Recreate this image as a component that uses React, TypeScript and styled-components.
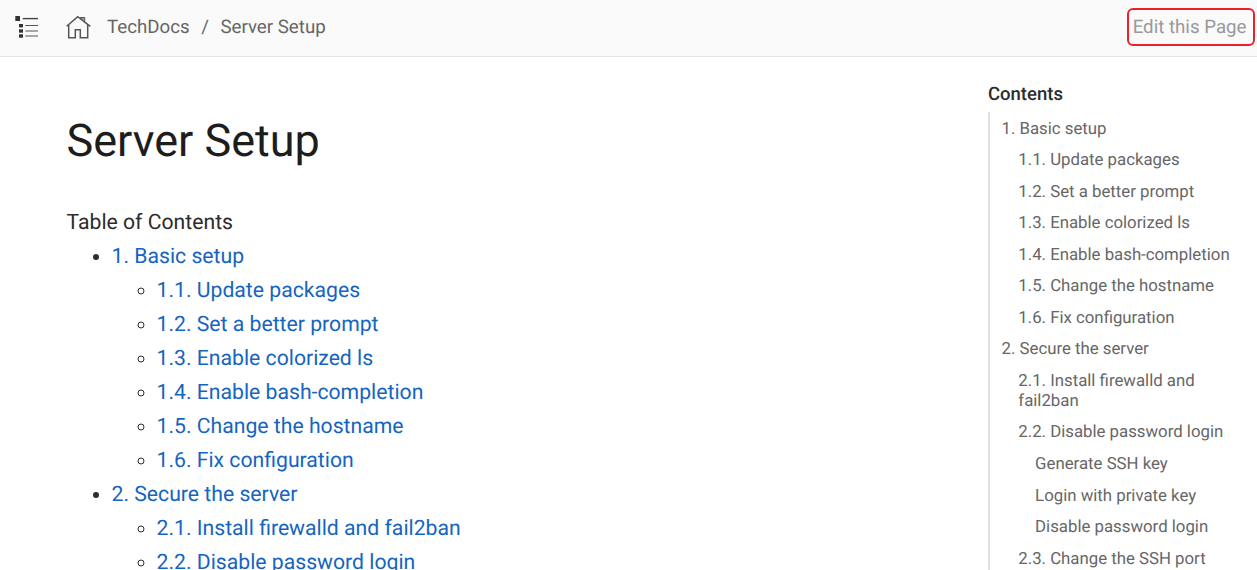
import React from "react";
import styled, { createGlobalStyle } from "styled-components";

const GlobalStyle = createGlobalStyle`
  html, body {
    margin: 0;
    padding: 0;
    height: 100%;
    overflow: hidden;
    background: #fff;
    font-family: Roboto, "Liberation Sans", sans-serif;
    text-rendering: geometricPrecision;
  }
  * { box-sizing: border-box; }
`;

const Page = styled.div`
  width: 1257px;
  height: 570px;
  overflow: hidden;
  display: flex;
  flex-direction: column;
`;

const Header = styled.header`
  flex: none;
  height: 57px;
  background: #fafafa;
  border-bottom: 1px solid #e5e5e5;
  display: flex;
  align-items: center;
  padding: 0 2px 2px 15px;
`;

const IconSlot = styled.span<{ $gap: number }>`
  display: flex;
  margin-right: ${(p) => p.$gap}px;
`;

const Crumbs = styled.nav`
  display: flex;
  align-items: center;
  font-size: 18.72px;
  color: #666;
  flex: 1;
`;

const CrumbSep = styled.span`
  margin: 0 11.5px;
`;

const EditLink = styled.a`
  font-size: 18.72px;
  color: #999;
  border: 2px solid #e8212c;
  border-radius: 6px;
  padding: 4px 6.5px 4px 4px;
  line-height: 26px;
`;

const Body = styled.div`
  flex: 1;
  display: flex;
  min-height: 0;
`;

const Main = styled.main`
  width: 988px;
  flex: none;
  padding: 0 0 0 66.5px;
`;

const Title = styled.h1`
  margin: 54px 0 35px;
  font-size: 45px;
  line-height: 60px;
  font-weight: 400;
  color: #1d1d1d;
`;

const TocHeading = styled.p`
  margin: 0;
  font-size: 21.2px;
  line-height: 34px;
  color: #2c2c2c;
`;

const TocList = styled.ul<{ $nested?: boolean }>`
  margin: 0;
  padding-left: 45px;
  list-style-type: ${(p) => (p.$nested ? "circle" : "disc")};
  font-size: 21.2px;
  line-height: 34px;
  color: #2c2c2c;
`;

const TocLink = styled.a`
  color: #1565c0;
`;

const Aside = styled.aside`
  flex: 1;
  padding-top: 25px;
`;

const AsideTitle = styled.div`
  font-size: 18.5px;
  font-weight: 500;
  line-height: 24px;
  color: #2c2c2c;
  margin-bottom: 6px;
`;

const AsideList = styled.ul`
  margin: 0;
  padding: 0 16px 0 0;
  list-style: none;
  border-left: 2px solid #e0e0e0;
`;

const AsideItem = styled.li<{ $level: number }>`
  font-size: 16.8px;
  line-height: 20px;
  color: #666;
  padding: 0 0 11.55px ${(p) => 11.5 + p.$level * 16.8}px;
  &:first-child { padding-top: 6.5px; }
`;

const MenuIcon = () => (
  <svg width="24" height="22" viewBox="0 0 24 22" fill="none">
    <rect x="0.3" y="0" width="4.7" height="5" fill="#333" />
    <rect x="4" y="8" width="4" height="3.4" fill="#333" />
    <rect x="4" y="13.3" width="4" height="3.4" fill="#333" />
    <rect x="4" y="18.3" width="4" height="3.4" fill="#333" />
    <path d="M7.700 2.600H23" stroke="#444" strokeWidth="1.4" />
    <path d="M10.300 9.500H23M10.300 15H23M10.300 20H23" stroke="#555" strokeWidth="1.2" />
  </svg>
);

const HomeIcon = () => (
  <svg width="25" height="24" viewBox="0 0 25 24" fill="none" stroke="#555" strokeWidth="1.5">
    <path d="M0.700 11.300 11.700 1.700 24.300 11.300" />
    <path d="M2.700 9.500V22.700H9.300V14.700H14.300V22.700H21.700V9.500" />
    <path d="M14.300 2.500H18.700V7.700z" fill="#999" strokeWidth="1" />
  </svg>
);

const toc = [
  { label: "1. Basic setup", items: ["1.1. Update packages", "1.2. Set a better prompt", "1.3. Enable colorized ls", "1.4. Enable bash-completion", "1.5. Change the hostname", "1.6. Fix configuration"] },
  { label: "2. Secure the server", items: ["2.1. Install firewalld and fail2ban", "2.2. Disable password login"] },
];

const side: [number, string][] = [
  [0, "1. Basic setup"],
  [1, "1.1. Update packages"],
  [1, "1.2. Set a better prompt"],
  [1, "1.3. Enable colorized ls"],
  [1, "1.4. Enable bash-completion"],
  [1, "1.5. Change the hostname"],
  [1, "1.6. Fix configuration"],
  [0, "2. Secure the server"],
  [1, "2.1. Install firewalld and fail2ban"],
  [1, "2.2. Disable password login"],
  [2, "Generate SSH key"],
  [2, "Login with private key"],
  [2, "Disable password login"],
  [1, "2.3. Change the SSH port"],
];

export default function App() {
  return (
    <Page>
      <GlobalStyle />
      <Header>
        <IconSlot $gap={27}><MenuIcon /></IconSlot>
        <IconSlot $gap={16}><HomeIcon /></IconSlot>
        <Crumbs>
          <span>TechDocs</span>
          <CrumbSep>/</CrumbSep>
          <span>Server Setup</span>
        </Crumbs>
        <EditLink>Edit this Page</EditLink>
      </Header>
      <Body>
        <Main>
          <Title>Server Setup</Title>
          <TocHeading>Table of Contents</TocHeading>
          <TocList>
            {toc.map((section) => (
              <li key={section.label}>
                <TocLink>{section.label}</TocLink>
                <TocList $nested>
                  {section.items.map((item) => (
                    <li key={item}><TocLink>{item}</TocLink></li>
                  ))}
                </TocList>
              </li>
            ))}
          </TocList>
        </Main>
        <Aside>
          <AsideTitle>Contents</AsideTitle>
          <AsideList>
            {side.map(([level, text]) => (
              <AsideItem key={text + level} $level={level}>{text}</AsideItem>
            ))}
          </AsideList>
        </Aside>
      </Body>
    </Page>
  );
}
